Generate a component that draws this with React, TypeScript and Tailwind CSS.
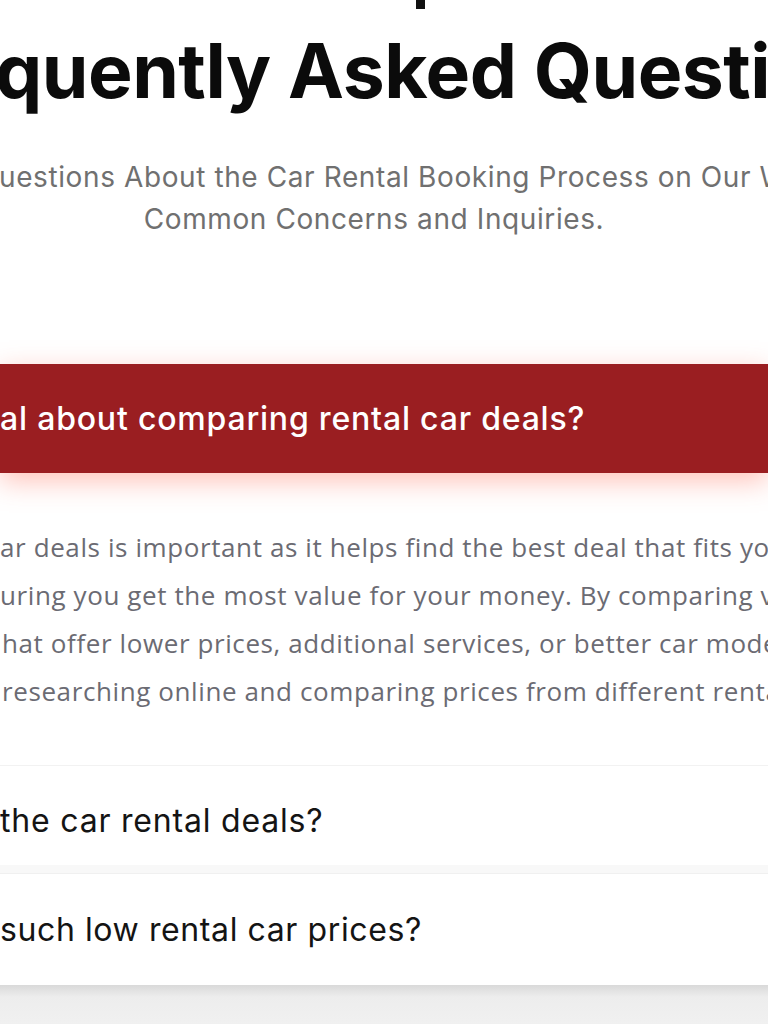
import React from "react";

function Clip({ pre, text, cls, textCls }: { pre: string; text: string; cls: string; textCls?: string }) {
  return (
    <div className={`flex whitespace-nowrap ${cls}`}>
      <div className="flex w-0 shrink-0 justify-end">
        <span>{pre}</span>
      </div>
      <span className={textCls ?? ""}>{text}</span>
    </div>
  );
}

export default function App() {
  const poppins = "font-['Inter','Noto_Sans',sans-serif]";
  const rubik = "font-['Open_Sans','Noto_Sans',sans-serif]";
  return (
    <div className="w-[768px] h-[1024px] overflow-hidden bg-white">
      {/* clipped glyph of the line above */}
      <div className="flex h-[9px]">
        <div className="ml-[416px] w-[9px] h-[9px] bg-[#111]" />
      </div>

      <Clip
        pre="Fre"
        text="quently Asked Questions"
        cls={`${poppins} mt-[22px] h-[80px] items-center text-[75px] leading-[80px] font-bold tracking-[-0.5px] text-[#0b0b0b]`}
        textCls="ml-[-5px]"
      />

      <div className={`${poppins} mt-[45px] text-[28px] font-normal tracking-[0.6px] text-[#707070]`}>
        <Clip
          pre="Answers to Common Q"
          text="uestions About the Car Rental Booking Process on Our Website, Addressing"
          cls="h-[42px] items-center leading-[42px]"
          textCls="ml-[-1px]"
        />
        <div className="h-[42px] leading-[42px] text-center pr-[20px]">Common Concerns and Inquiries.</div>
      </div>

      <div className="mt-[124px] h-[109px] bg-[#9a1e21] shadow-[0_8px_26px_rgba(255,120,100,0.45)] flex items-center">
        <Clip
          pre="What is the big de"
          text="al about comparing rental car deals?"
          cls={`${poppins} text-[32px] font-medium tracking-[0.8px] text-white leading-[40px]`}
        />
      </div>

      <div className={`${rubik} mt-[50px] text-[26px] tracking-[0.6px] text-[#6b6b73] leading-[48px]`}>
        <Clip pre="Comparing rental c" text="ar deals is important as it helps find the best deal that fits your needs and budget," cls="h-[48px]" />
        <Clip pre="ens" text="uring you get the most value for your money. By comparing various options," cls="h-[48px]" />
        <Clip pre="you can find deals t" text="hat offer lower prices, additional services, or better car models." cls="h-[48px]" textCls="ml-[2px]" />
        <Clip pre="This can be done by" text="researching online and comparing prices from different rental companies." cls="h-[48px]" textCls="ml-[2px]" />
      </div>

      <div className="mt-[50px] bg-[#f7f7f7]">
        <div className="h-[100px] pt-[10px] bg-white border-t border-[#f2f2f2] flex items-center">
          <Clip
            pre="How do I find "
            text="the car rental deals?"
            cls={`${poppins} text-[32px] tracking-[0.8px] text-[#141414] leading-[40px]`}
          />
        </div>
        <div className="h-[8px] bg-[#f8f8f8]" />
        <div className="h-[112px] bg-white border-t border-[#f0f0f0] flex items-center">
          <Clip
            pre="How do you offer "
            text="such low rental car prices?"
            cls={`${poppins} text-[32px] tracking-[0.6px] text-[#141414] leading-[40px]`}
          />
        </div>
      </div>
      <div className="h-[60px] bg-[linear-gradient(#d9d9d9,#ededed_20%,#f3f3f3)]" />
    </div>
  );
}
